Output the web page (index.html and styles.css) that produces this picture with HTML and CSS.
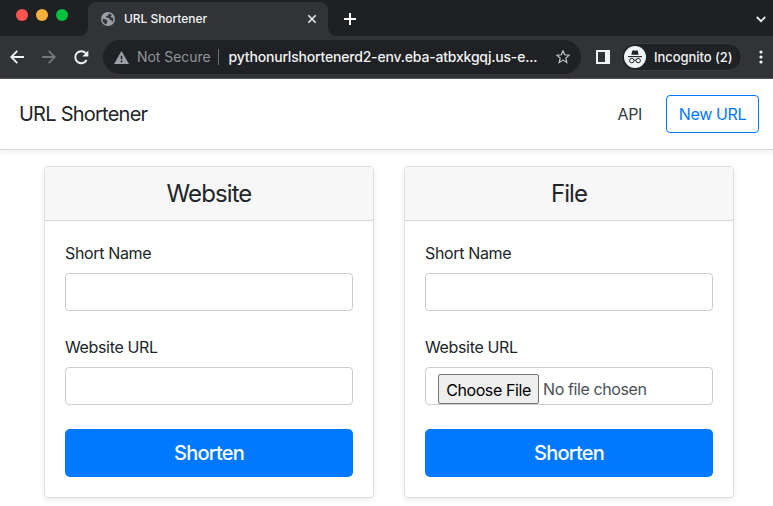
FILE: index.html
```
<!DOCTYPE html>
<html lang="en">
<head>
<meta charset="utf-8">
<title>URL Shortener</title>
<link rel="stylesheet" href="styles.css">
</head>
<body>
<header class="browser">
  <div class="tabstrip">
    <div class="lights"><i class="red"></i><i class="yellow"></i><i class="green"></i></div>
    <div class="tab">
      <svg class="globe" width="14" height="14" viewBox="0 0 14 14"><circle cx="7" cy="7" r="7" fill="#9aa0a6"/><path d="M1.5 6.5L5 7.6 6.8 9.2 5.8 10.2V12.6A6 6 0 0 1 1.5 6.5ZM8.3 1.5L7.2 3.2 5 4.3 5.5 5.8 8.3 6 8.6 7.8 10.6 8.2 11 10.6A5.5 5.5 0 0 0 12.4 6L10.4 5.6 9.6 4.2 11 3.2A6 6 0 0 0 8.3 1.5Z" fill="#35363a"/></svg>
      <span class="tab-title">URL Shortener</span>
      <svg class="tab-close" width="10" height="10" viewBox="0 0 10 10"><path d="M1.3 1.3l7.4 7.4M8.7 1.3L1.3 8.7" stroke="#e8eaed" stroke-width="1.6"/></svg>
    </div>
    <svg class="plus" width="12" height="12" viewBox="0 0 12 12"><path d="M6 0v12M0 6h12" stroke="#fff" stroke-width="2"/></svg>
    <svg class="chevron" width="10" height="7" viewBox="0 0 10 7"><path d="M.8 1L5 5.2 9.2 1" fill="none" stroke="#e8eaed" stroke-width="1.8"/></svg>
  </div>
  <div class="toolbar">
    <svg class="back" width="14" height="14" viewBox="0 0 14 14"><path d="M14 7H1.5M7.3.9L1.2 7l6.1 6.1" fill="none" stroke="#f1f3f4" stroke-width="1.8"/></svg>
    <svg class="forward" width="14" height="14" viewBox="0 0 14 14"><path d="M0 7h12.5M6.7.9L12.8 7l-6.1 6.1" fill="none" stroke="#74777b" stroke-width="1.8"/></svg>
    <svg class="reload" width="15" height="15" viewBox="0 0 15 15"><path d="M12.6 10A6 6 0 1 1 11.8 3.2" fill="none" stroke="#f1f3f4" stroke-width="1.9"/><path d="M14.3.6v6H8.3z" fill="#f1f3f4"/></svg>
    <div class="address">
      <svg class="warning" width="15" height="13" viewBox="0 0 15 13"><path d="M7.5 0L15 13H0z" fill="#9aa0a6"/><path d="M7.5 4.7v3.6M7.5 9.5v1.7" stroke="#202124" stroke-width="1.5"/></svg>
      <span class="insecure">Not Secure</span>
      <i class="divider"></i>
      <span class="address-text">pythonurlshortenerd2-env.eba-atbxkgqj.us-e...</span>
      <svg class="star" width="14" height="14" viewBox="0 0 14 14"><path d="M7 .8l1.7 4 4.4.4-3.3 2.9 1 4.3L7 10.1l-3.8 2.3 1-4.3L.9 5.2l4.4-.4z" fill="none" stroke="#c4c7ca" stroke-width="1.2"/></svg>
    </div>
    <svg class="panel" width="14" height="14" viewBox="0 0 14 14"><path d="M0 0h14v14H0zM2 2v10h7V2z" fill="#f1f3f4" fill-rule="evenodd"/></svg>
    <div class="incognito">
      <svg width="22" height="22" viewBox="0 0 22 22"><circle cx="11" cy="11" r="11" fill="#f1f3f4"/><path d="M7.3 8.8l1.1-4.1q.2-.6.9-.4L11 4.8l1.7-.5q.7-.2.9.4l1.1 4.1z" fill="#202124"/><path d="M4 10.6h14" stroke="#202124" stroke-width="1.1"/><g fill="none" stroke="#202124"><circle cx="7.8" cy="14.6" r="2.2"/><circle cx="14.2" cy="14.6" r="2.2"/><path d="M10 14.4q1-.7 2 0"/></g></svg>
      <span>Incognito (2)</span>
    </div>
    <svg class="more" width="4" height="14" viewBox="0 0 4 14" fill="#f1f3f4"><circle cx="2" cy="2" r="1.6"/><circle cx="2" cy="7" r="1.6"/><circle cx="2" cy="12" r="1.6"/></svg>
  </div>
</header>
<nav class="navbar">
  <div class="brand">URL Shortener</div>
  <a class="nav-link">API</a>
  <a class="new-url">New URL</a>
</nav>
<main class="cards">
  <section class="card">
    <h4 class="card-header">Website</h4>
    <form class="card-body">
      <label>Short Name</label>
      <input class="field" type="text">
      <label>Website URL</label>
      <input class="field" type="text">
      <button class="submit" type="button">Shorten</button>
    </form>
  </section>
  <section class="card">
    <h4 class="card-header">File</h4>
    <form class="card-body">
      <label>Short Name</label>
      <input class="field" type="text">
      <label>Website URL</label>
      <div class="field file"><button class="choose" type="button">Choose File</button><span>No file chosen</span></div>
      <button class="submit" type="button">Shorten</button>
    </form>
  </section>
</main>
</body>
</html>
```
FILE: styles.css
```
* { box-sizing: border-box; }
html { overflow: hidden; }
body { margin: 0; height: 506px; overflow: hidden; background: #fff; color: #212529; font: 16px/24px Inter, "Liberation Sans", sans-serif; letter-spacing: -.35px; }
svg { display: block; flex: none; }
span, a { white-space: nowrap; }
input, button { font: inherit; letter-spacing: inherit; }

.browser { height: 79px; background: #323337; border-bottom: 1px solid #55565a; }
.tabstrip { height: 36px; background: #1f2022; display: flex; }
.lights { width: 88px; padding: 9px 0 0 16px; display: flex; gap: 8px; }
.lights i { width: 12px; height: 12px; border-radius: 50%; }
.red { background: #ff5450; }
.yellow { background: #ffb03c; }
.green { background: #00c140; }
.tab { position: relative; width: 240px; margin-top: 2px; padding: 0 16px 0 13px; display: flex; align-items: center; background: #323337; border-radius: 8px 8px 0 0; }
.tab::before, .tab::after { content: ""; position: absolute; bottom: 0; width: 8px; height: 8px; }
.tab::before { left: -8px; background: radial-gradient(circle at 0 0, transparent 7.5px, #323337 8px); }
.tab::after { right: -8px; background: radial-gradient(circle at 100% 0, transparent 7.5px, #323337 8px); }
.tab-title { margin-left: 9px; font-size: 12px; font-weight: 500; letter-spacing: -.05px; color: #f1f3f4; }
.tab-close { margin-left: auto; margin-right: -5px; }
.plus { margin: 13px 0 0 16px; }
.chevron { margin: 16px 7px 0 auto; }

.toolbar { height: 42px; display: flex; align-items: center; }
.back { margin-left: 10px; }
.forward { margin-left: 18px; }
.reload { margin-left: 18px; }
.address { width: 478px; height: 34px; margin-left: 14px; border-radius: 17px; background: #202124; display: flex; align-items: center; padding: 0 11px; }
.insecure { margin-left: 8px; font-size: 14px; letter-spacing: -.05px; color: #8f9499; }
.divider { width: 1px; height: 16px; margin: 0 10px 0 7px; background: #6b6e72; }
.address-text { font-size: 14px; font-weight: 500; letter-spacing: -.19px; color: #f1f3f4; }
.star { margin-left: auto; }
.panel { margin-left: 15px; }
.incognito { width: 121px; height: 28px; margin-left: 11px; padding-left: 2px; border: 1px solid #3c3d41; border-radius: 14px; background: #202124; display: flex; align-items: center; gap: 8px; color: #f1f3f4; font-size: 13px; font-weight: 500; letter-spacing: -.05px; }
.more { margin-left: 17px; }

.navbar { height: 71px; padding: 0 14px 0 19px; display: flex; align-items: center; border-bottom: 1px solid #d9dcdf; box-shadow: 0 2px 6px rgba(0,0,0,.08); }
.brand { margin-right: auto; font-size: 20px; letter-spacing: -.76px; }
.nav-link { margin-right: 24px; color: #343a40; }
.new-url { width: 93px; height: 38px; border: 1px solid #0078ff; border-radius: 4px; text-align: center; line-height: 37px; color: #0078ff; }

.cards { display: flex; gap: 30px; padding: 16px 39px 0 44px; }
.card { width: 330px; height: 332px; border: 1px solid #dfdfdf; border-radius: 4px; box-shadow: 0 2px 6px rgba(0,0,0,.08); }
.card-header { height: 54px; margin: 0; border-bottom: 1px solid #dadada; border-radius: 3px 3px 0 0; background: #f7f7f7; text-align: center; font-size: 24px; font-weight: 400; line-height: 54px; letter-spacing: -.9px; }
.card-body { display: flex; flex-direction: column; padding: 20px; }
label { height: 24px; margin-bottom: 8px; }
.field { width: 100%; height: 38px; margin: 0 0 24px; padding: 6px 12px; border: 1px solid #c8ced3; border-radius: 4px; background: #fff; outline: 0; }
.file { display: flex; overflow: hidden; color: #495057; line-height: 30px; letter-spacing: -.4px; }
.choose { width: 101px; height: 30px; flex: none; margin-right: 4px; padding: 0 0 2px; border: 1px solid #767676; border-radius: 2px; background: #efefef; color: #000; }
.submit { height: 48px; border: 0; border-radius: 5px; background: #0078ff; color: #fff; font-size: 20px; font-weight: 500; letter-spacing: -.8px; }
```
